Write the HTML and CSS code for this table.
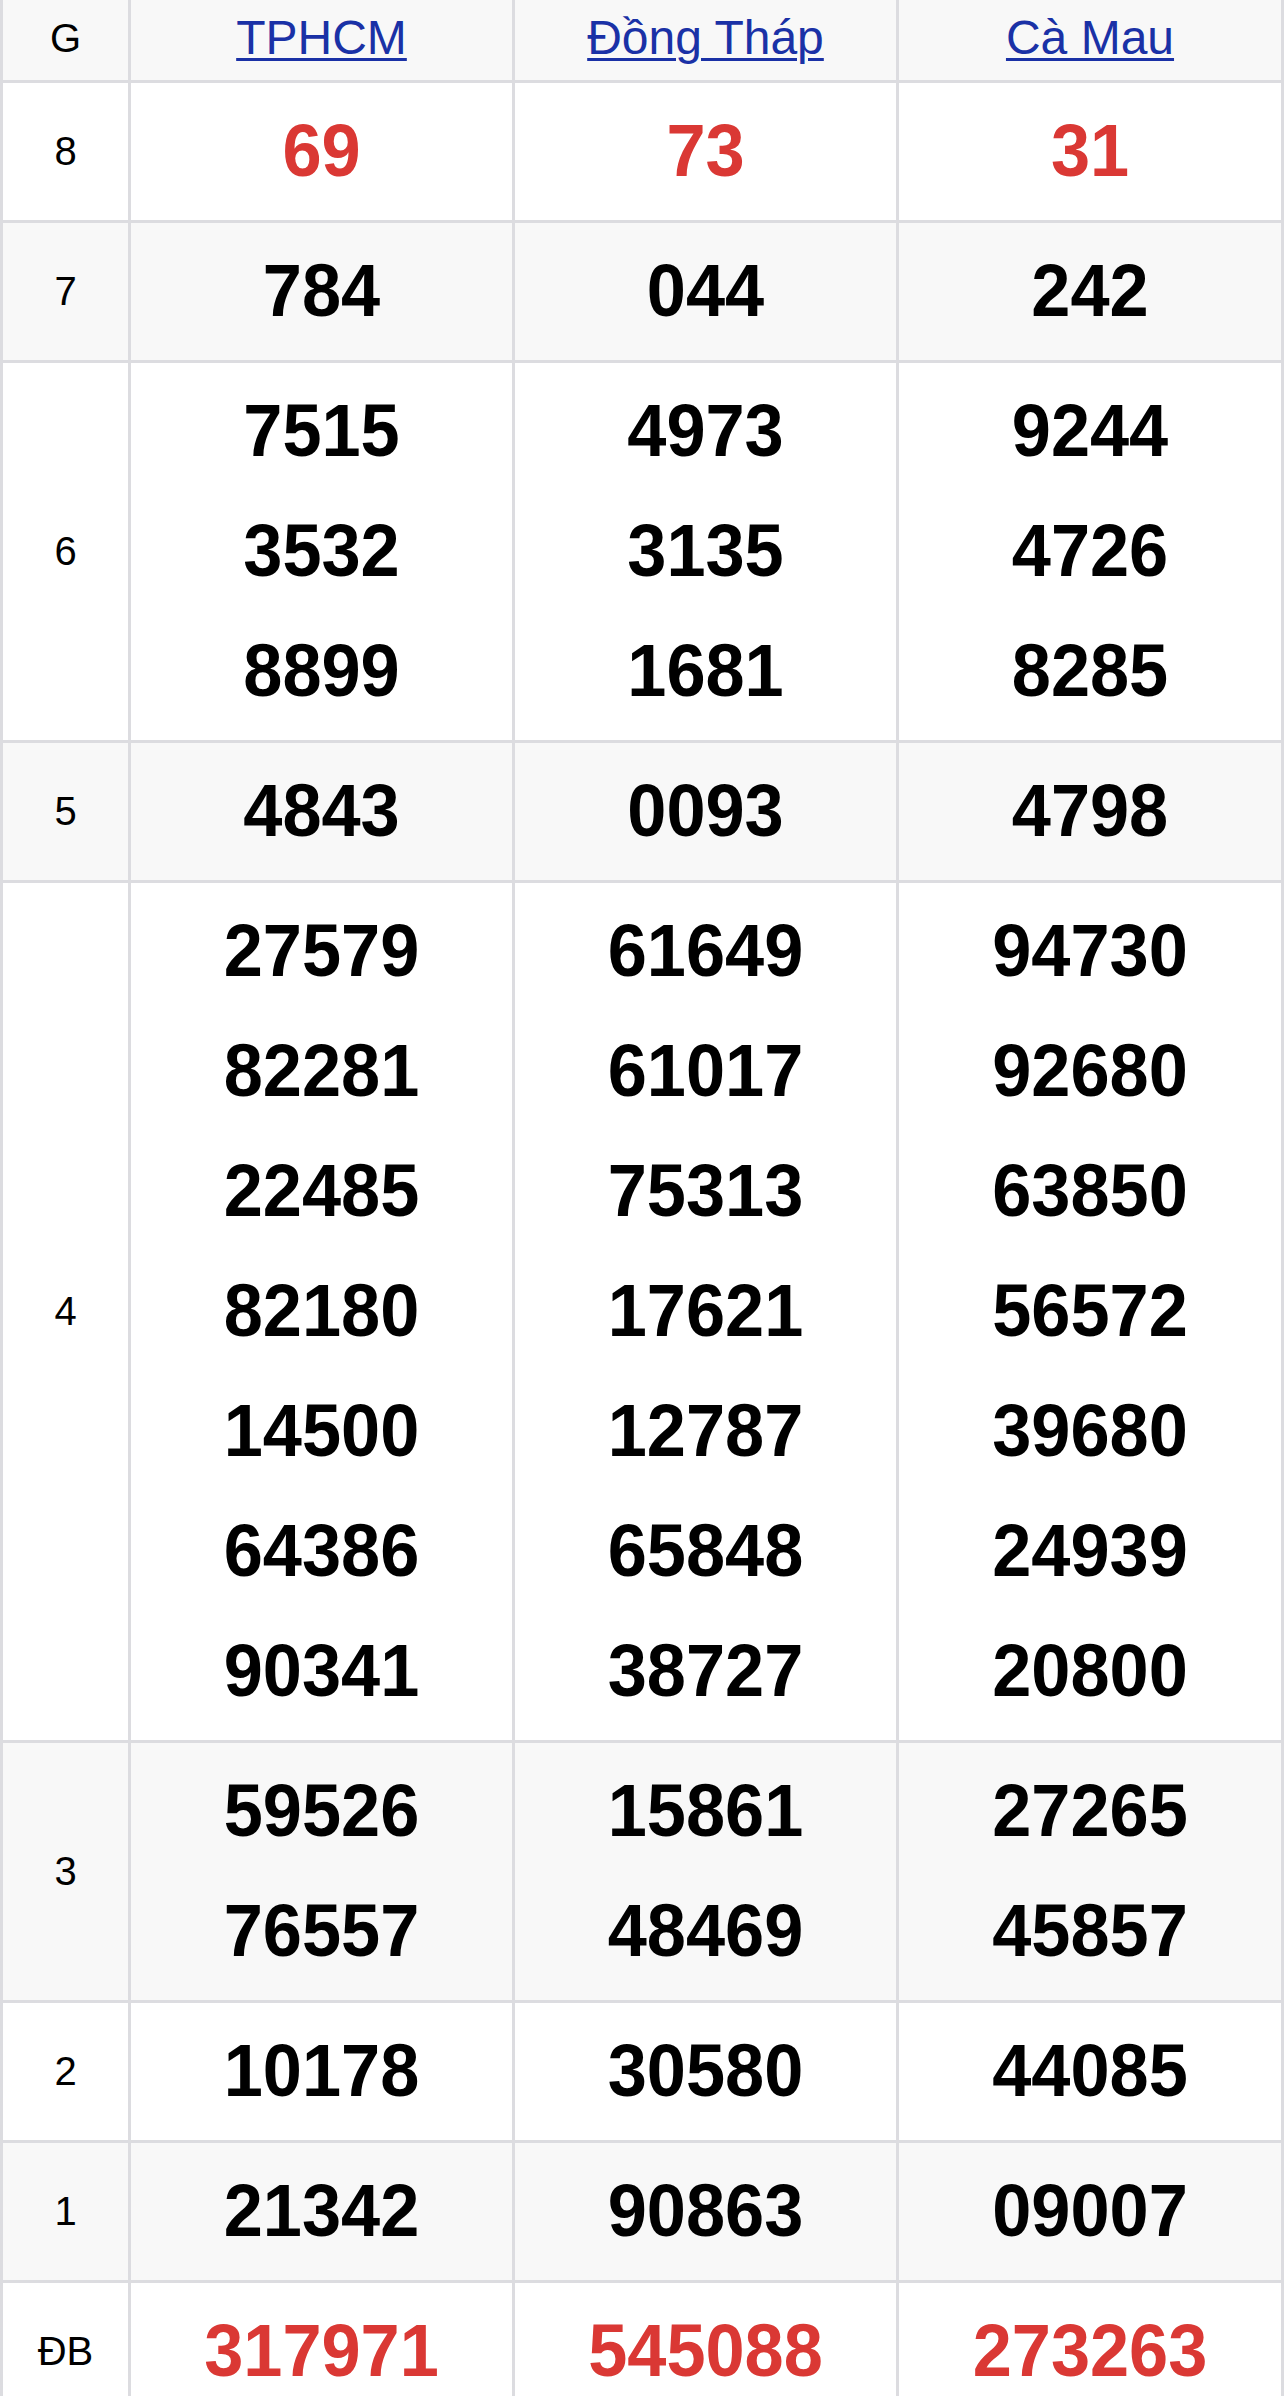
FILE: index.html
```html
<!DOCTYPE html>
<html lang="vi">
<head>
<meta charset="utf-8">
<title>Kết quả xổ số</title>
<link rel="stylesheet" href="styles.css">
</head>
<body>
<table class="kq">
  <colgroup>
    <col class="c-label">
    <col class="c-prov">
    <col class="c-prov">
    <col class="c-last">
  </colgroup>
  <thead>
    <tr class="alt">
      <th class="lbl">G</th>
      <th class="prov"><a href="#">TPHCM</a></th>
      <th class="prov"><a href="#">Đồng Tháp</a></th>
      <th class="prov"><a href="#">Cà Mau</a></th>
    </tr>
  </thead>
  <tbody>
    <tr>
      <td class="lbl">8</td>
      <td class="num red"><div>69</div></td>
      <td class="num red"><div>73</div></td>
      <td class="num red"><div>31</div></td>
    </tr>
    <tr class="alt">
      <td class="lbl">7</td>
      <td class="num"><div>784</div></td>
      <td class="num"><div>044</div></td>
      <td class="num"><div>242</div></td>
    </tr>
    <tr>
      <td class="lbl">6</td>
      <td class="num"><div>7515</div><div>3532</div><div>8899</div></td>
      <td class="num"><div>4973</div><div>3135</div><div>1681</div></td>
      <td class="num"><div>9244</div><div>4726</div><div>8285</div></td>
    </tr>
    <tr class="alt">
      <td class="lbl">5</td>
      <td class="num"><div>4843</div></td>
      <td class="num"><div>0093</div></td>
      <td class="num"><div>4798</div></td>
    </tr>
    <tr>
      <td class="lbl">4</td>
      <td class="num"><div>27579</div><div>82281</div><div>22485</div><div>82180</div><div>14500</div><div>64386</div><div>90341</div></td>
      <td class="num"><div>61649</div><div>61017</div><div>75313</div><div>17621</div><div>12787</div><div>65848</div><div>38727</div></td>
      <td class="num"><div>94730</div><div>92680</div><div>63850</div><div>56572</div><div>39680</div><div>24939</div><div>20800</div></td>
    </tr>
    <tr class="alt">
      <td class="lbl">3</td>
      <td class="num"><div>59526</div><div>76557</div></td>
      <td class="num"><div>15861</div><div>48469</div></td>
      <td class="num"><div>27265</div><div>45857</div></td>
    </tr>
    <tr>
      <td class="lbl">2</td>
      <td class="num"><div>10178</div></td>
      <td class="num"><div>30580</div></td>
      <td class="num"><div>44085</div></td>
    </tr>
    <tr class="alt">
      <td class="lbl">1</td>
      <td class="num"><div>21342</div></td>
      <td class="num"><div>90863</div></td>
      <td class="num"><div>09007</div></td>
    </tr>
    <tr>
      <td class="lbl">ĐB</td>
      <td class="num red"><div>317971</div></td>
      <td class="num red"><div>545088</div></td>
      <td class="num red"><div>273263</div></td>
    </tr>
  </tbody>
</table>
</body>
</html>
```

FILE: styles.css
```css
html, body {
  margin: 0;
  padding: 0;
  background: #ffffff;
}

body {
  font-family: "Liberation Sans", Arial, sans-serif;
  color: #000000;
}

.kq {
  width: 1284px;
  table-layout: fixed;
  border-collapse: separate;
  border-spacing: 0;
}

.c-label { width: 131px; }
.c-prov { width: 384px; }
.c-last { width: 385px; }

.kq th,
.kq td {
  box-sizing: border-box;
  border-right: 3px solid #dcdce0;
  border-bottom: 3px solid #dcdce0;
  text-align: center;
  vertical-align: middle;
  padding: 0;
}

.kq .lbl {
  border-left: 3px solid #dcdce0;
  font-size: 40px;
  font-weight: normal;
}

.kq tr.alt th,
.kq tr.alt td {
  background: #f8f8f8;
}

.kq th {
  height: 83px;
  line-height: 76px;
  padding-bottom: 4px;
  font-weight: normal;
}

.kq th.prov {
  font-size: 48px;
}

.kq th a {
  color: #1a31a6;
  text-decoration: underline;
  text-decoration-thickness: 3px;
  text-underline-offset: 4px;
}

.kq td.num {
  padding: 8px 0 9px;
  font-size: 74px;
  font-weight: bold;
  line-height: 120px;
}

.kq td.num div {
  transform: scaleX(0.95);
}

.kq td.red {
  color: #da3834;
}
```
